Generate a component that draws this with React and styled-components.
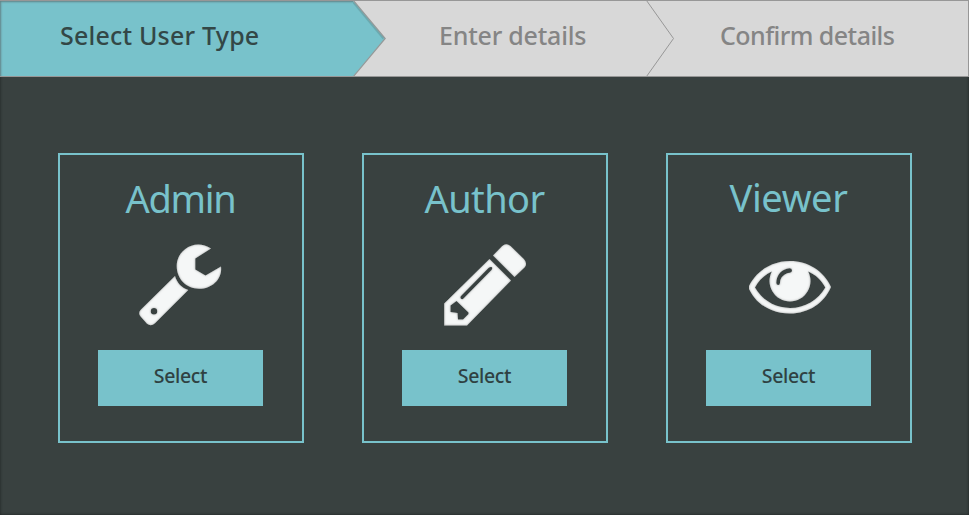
import React from "react";
import styled, { createGlobalStyle } from "styled-components";

const GlobalStyle = createGlobalStyle`
  *, *::before, *::after { box-sizing: border-box; }
  body { margin: 0; background: #394140; font-family: "Noto Sans", "Open Sans", sans-serif; }
`;

const Page = styled.div`
  display: flex;
  flex-direction: column;
  width: 969px;
  height: 515px;
  background: #394140;
  box-shadow: inset 0 0 3px rgba(0, 0, 0, 0.5);
`;

const Steps = styled.header`
  display: flex;
  height: 77px;
  border: solid #979797;
  border-width: 1px 1px 1px 0;
  background: #d8d8d8;
`;

const Step = styled.div`
  flex: none;
  width: ${(p) => p.$width}px;
  height: 75px;
  padding: 16px 0 0 ${(p) => p.$indent}px;
  background: ${(p) => (p.$active ? "#78c2cb" : "#d8d8d8")};
  box-shadow: ${(p) => (p.$active ? "inset 2px 2px 2px -1px rgba(80, 80, 80, 0.55)" : "none")};
`;

const StepLabel = styled.span`
  display: block;
  width: max-content;
  font-size: 25px;
  line-height: 36px;
  font-weight: 500;
  white-space: nowrap;
  letter-spacing: ${(p) => p.$spacing}px;
  color: ${(p) => (p.$active ? "#334746" : "#858585")};
`;

const Chevron = styled.svg`
  flex: none;
  display: block;
  height: 75px;
`;

const Cards = styled.main`
  display: flex;
  gap: 58px;
  padding: 76px 0 0 58px;
`;

const Card = styled.section`
  display: flex;
  flex-direction: column;
  align-items: center;
  width: 246px;
  height: 290px;
  padding-right: 1px;
  border: 2px solid #78c2cb;
`;

const Title = styled.h2`
  height: 52px;
  margin: ${(p) => p.$top}px 0 ${(p) => 37 - p.$top}px;
  font-size: 38px;
  line-height: 52px;
  font-weight: 400;
  letter-spacing: ${(p) => p.$spacing}px;
  color: #78c2cb;
`;

const Icon = styled.svg`
  display: block;
  flex: none;
  width: 101px;
  height: 100px;
  margin-top: -9px;
`;

const SelectButton = styled.button`
  width: 165px;
  height: 56px;
  margin-top: 15px;
  padding: 0 0 4px;
  border: 0;
  background: #78c2cb;
  color: #2f4142;
  font: 500 19.5px/26px "Noto Sans", "Open Sans", sans-serif;
  letter-spacing: -0.35px;
`;

function IconShade({ id }) {
  return (
    <filter id={id} x="-10%" y="-10%" width="120%" height="120%">
      <feGaussianBlur in="SourceAlpha" stdDeviation="1.3" result="soft" />
      <feComposite in="SourceAlpha" in2="soft" operator="out" result="edge" />
      <feFlood floodColor="#000" floodOpacity="0.7" />
      <feComposite in2="edge" operator="in" result="shade" />
      <feMerge>
        <feMergeNode in="SourceGraphic" />
        <feMergeNode in="shade" />
      </feMerge>
    </filter>
  );
}

function WrenchIcon() {
  return (
    <Icon viewBox="0 0 101 100" aria-hidden="true">
      <IconShade id="shade-wrench" />
      <g fill="#f5f7f7" filter="url(#shade-wrench)">
        <path d="M81 13.5 C65 3 46.7 15 46.7 31 C46.7 44 56.5 53.7 69 53.7 C83 53.7 92.5 43 91 31.5 L75.5 40.5 L65.3 34.5 V23.5 Z" />
        <path fillRule="evenodd" d="M45 41 C47 48 52 53 58.3 55 L25 88.3 Q21 92 17 88.8 L10.8 81.8 Q7.5 78 11 74.5 Z M24 73 A3.2 3.2 0 1 0 24 79.4 A3.2 3.2 0 1 0 24 73 Z" />
      </g>
    </Icon>
  );
}

function PencilIcon() {
  return (
    <Icon viewBox="-1 0 101 100" aria-hidden="true">
      <IconShade id="shade-pencil" />
      <g fill="#f5f7f7" filter="url(#shade-pencil)">
        <path d="M58 20.5 L67 11.3 Q71 7.2 75.5 11 L88.8 24 Q93 28.5 89.5 32.5 L79.5 42 Z" />
        <path fillRule="evenodd" d="M54.5 24 L76 45.5 L32 90.5 H9.2 V68.5 Z M15.5 70.5 V77 L22.5 78 L23 84.5 H28 L33.5 79 V77.5 L21.5 66 Z M25.6 63.2 Q27 65 28.5 63.5 L56.5 35 Q58 32.5 56.5 32 Q55 31.5 53.5 33 L26 61 Q25 62 25.6 63.2 Z" />
      </g>
    </Icon>
  );
}

function EyeIcon() {
  return (
    <Icon viewBox="-2 0 101 100" aria-hidden="true">
      <IconShade id="shade-eye" />
      <g filter="url(#shade-eye)">
        <path
          fill="#f5f7f7"
          fillRule="evenodd"
          d="M9 51 C16 36 32 26 50 26 C68 26 84 36 91 52 C84 68 69 78.5 50 78.5 C31 78.5 16 69 9 54 Z M31.8 36.5 C24 40 18.5 46 15 52.5 C22 65 35 73 50 73 C65 73 78 65 85.3 52.5 C81 45 76 40 68.2 36.5 A20.5 20.5 0 1 1 31.8 36.5 Z M36.3 48 Q36.5 50 38.2 50 Q40 50 40 47.5 C40 42.5 44.5 38 50 37.7 Q52 37.3 52 35.5 Q52 33.2 49.5 33.2 C42 33.7 36.3 40 36.3 48 Z"
        />
      </g>
    </Icon>
  );
}

const roles = [
  { name: "Admin", top: 17, spacing: -1.3, Glyph: WrenchIcon },
  { name: "Author", top: 17, spacing: -0.6, Glyph: PencilIcon },
  { name: "Viewer", top: 16, spacing: -0.4, Glyph: EyeIcon },
];

export default function App() {
  return (
    <>
      <GlobalStyle />
      <Page>
        <Steps>
          <Step $active $width={353} $indent={60}>
            <StepLabel $active $spacing={0.2}>Select User Type</StepLabel>
          </Step>
          <Chevron width="33" viewBox="0 0 33 75" aria-hidden="true">
            <path d="M0 0 H0.5 L32 37.5 L0.5 75 H0 Z" fill="#78c2cb" />
            <path d="M0 1 L30.5 37.5" fill="none" stroke="#5f8f94" strokeWidth="2" opacity=".5" />
            <path d="M0 -1 L32.2 37.5 L0 76" fill="none" stroke="#949999" strokeWidth="1.2" />
          </Chevron>
          <Step $width={260} $indent={53}>
            <StepLabel $spacing={-0.22}>Enter details</StepLabel>
          </Step>
          <Chevron width="28" viewBox="0 0 28 75" aria-hidden="true">
            <path d="M0.5 -0.5 L27.5 37.5 L0.5 75.5" fill="none" stroke="#979797" />
          </Chevron>
          <Step $width={290} $indent={46}>
            <StepLabel $spacing={-0.55}>Confirm details</StepLabel>
          </Step>
        </Steps>
        <Cards>
          {roles.map(({ name, top, spacing, Glyph }) => (
            <Card key={name}>
              <Title $top={top} $spacing={spacing}>{name}</Title>
              <Glyph />
              <SelectButton type="button">Select</SelectButton>
            </Card>
          ))}
        </Cards>
      </Page>
    </>
  );
}
